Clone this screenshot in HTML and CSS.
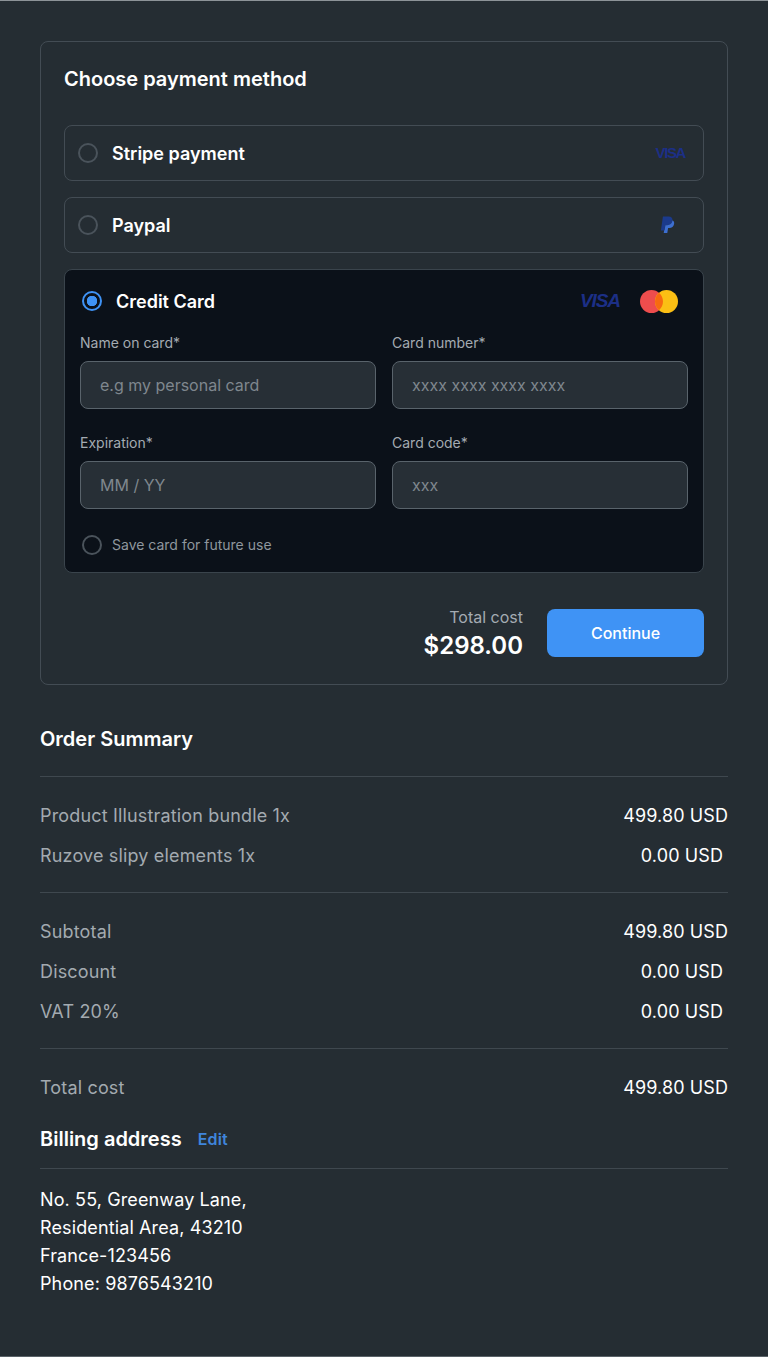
FILE: index.html
```html
<!DOCTYPE html>
<html lang="en">
<head>
  <meta charset="UTF-8">
  <meta name="viewport" content="width=device-width, initial-scale=1.0">
  <title>Checkout</title>
  <link rel="stylesheet" href="styles.css">
</head>
<body>
  <div class="page">
    <section class="pay-card">
      <h2 class="pay-title">Choose payment method</h2>

      <div class="option">
        <span class="radio"></span>
        <span class="option-name">Stripe payment</span>
        <span class="visa visa-small">VISA</span>
      </div>

      <div class="option">
        <span class="radio"></span>
        <span class="option-name">Paypal</span>
        <svg class="paypal" width="15" height="18" viewBox="0 0 14 18">
          <path d="M2.4 0.5H8C11 0.5 12.4 2.2 11.9 4.8C11.4 7.7 9.4 9.2 6.6 9.2H4.9L4 14.6H0.4Z" fill="#1b3a8c"/>
          <path d="M12 4.2C13.4 5 13.9 6.3 13.6 8C13.1 10.5 11.3 11.9 8.8 11.9H7.6L6.8 17H3.2L3.7 14.2H4.1L4.9 9.2H6.6C9.4 9.2 11.4 7.7 11.9 4.8Z" fill="#3d6fd1"/>
        </svg>
      </div>

      <div class="card-box">
        <div class="card-head">
          <span class="radio radio-on"></span>
          <span class="option-name">Credit Card</span>
          <span class="visa">VISA</span>
          <svg class="master" width="38" height="23" viewBox="0 0 38 23">
            <circle cx="11.5" cy="11.5" r="11.5" fill="#ee4d4d"/>
            <circle cx="26.5" cy="11.5" r="11.5" fill="#fbbf14"/>
            <path d="M19 2.8a11.5 11.5 0 0 1 0 17.4a11.5 11.5 0 0 1 0-17.4Z" fill="#f76a10"/>
          </svg>
        </div>

        <div class="fields">
          <div class="field">
            <label class="field-label">Name on card*</label>
            <div class="input">e.g my personal card</div>
          </div>
          <div class="field">
            <label class="field-label">Card number*</label>
            <div class="input input-short">xxxx xxxx xxxx xxxx</div>
          </div>
          <div class="field">
            <label class="field-label">Expiration*</label>
            <div class="input">MM / YY</div>
          </div>
          <div class="field">
            <label class="field-label">Card code*</label>
            <div class="input input-short">xxx</div>
          </div>
        </div>

        <div class="save-row">
          <span class="radio"></span>
          <span class="save-text">Save card for future use</span>
        </div>
      </div>

      <div class="pay-foot">
        <div class="pay-total">
          <div class="pay-total-label">Total cost</div>
          <div class="pay-total-value">$298.00</div>
        </div>
        <button class="continue" type="button">Continue</button>
      </div>
    </section>

    <h3 class="section-title summary-title">Order Summary</h3>

    <div class="rows">
      <div class="row"><span>Product Illustration bundle 1x</span><b>499.80 USD</b></div>
      <div class="row"><span>Ruzove slipy elements 1x</span><b class="zero">0.00 USD</b></div>
    </div>
    <div class="rows">
      <div class="row"><span>Subtotal</span><b>499.80 USD</b></div>
      <div class="row"><span>Discount</span><b class="zero">0.00 USD</b></div>
      <div class="row"><span>VAT 20%</span><b class="zero">0.00 USD</b></div>
    </div>
    <div class="rows rows-total">
      <div class="row"><span>Total cost</span><b>499.80 USD</b></div>
    </div>

    <div class="billing-head">
      <h3 class="section-title">Billing address</h3>
      <a class="edit" href="#">Edit</a>
    </div>
    <p class="address">No. 55, Greenway Lane,<br>Residential Area, 43210<br>France-123456<br>Phone: 9876543210</p>
  </div>
</body>
</html>
```

FILE: styles.css
```css
* {
  box-sizing: border-box;
}
body {
  margin: 0;
  background-color: #252d33;
  font-family: Inter, 'Noto Sans', sans-serif;
  color: #fff;
}
.page {
  min-height: 1357px;
  padding: 40px 40px 0;
  border-top: 1px solid #8d9398;
  border-bottom: 1px solid #5a6268;
}
.pay-card {
  height: 644px;
  padding: 24px 23px;
  border: 1px solid #434c54;
  border-radius: 8px;
}
.pay-title {
  margin: 0 0 33px;
  font-size: 20px;
  line-height: 26px;
  font-weight: 600;
}
.option {
  display: flex;
  align-items: center;
  height: 56px;
  margin-bottom: 16px;
  padding: 0 18px 0 13px;
  border: 1px solid #434c54;
  border-radius: 8px;
}
.radio {
  width: 20px;
  height: 20px;
  flex: none;
  border: 2px solid #4a535b;
  border-radius: 50%;
}
.radio-on {
  border-color: #3f93f5;
  background: radial-gradient(circle, #3f93f5 0, #3f93f5 5px, transparent 5.5px);
}
.option-name {
  flex: 1;
  margin-left: 14px;
  font-size: 18px;
  font-weight: 600;
}
.visa {
  font-family: 'Liberation Sans', sans-serif;
  font-size: 19px;
  font-weight: 700;
  font-style: italic;
  letter-spacing: -1.1px;
  color: #1c2f86;
}
.visa-small {
  padding-bottom: 2px;
  font-size: 15px;
  font-style: normal;
  letter-spacing: -1.4px;
}
.paypal {
  margin-right: 10px;
}
.card-box {
  height: 304px;
  padding: 19px 15px 0;
  background-color: #0b1119;
  border: 1px solid #3a444c;
  border-radius: 8px;
}
.card-head {
  display: flex;
  align-items: center;
  height: 24px;
  padding: 0 10px 0 2px;
}
.card-head .option-name {
  margin-left: 14px;
}
.master {
  margin-left: 20px;
}
.fields {
  display: grid;
  grid-template-columns: 1fr 1fr;
  gap: 24px 16px;
  margin-top: 20px;
}
.field-label {
  display: block;
  margin-bottom: 8px;
  font-size: 14px;
  line-height: 20px;
  color: #a4abb2;
}
.input {
  height: 48px;
  padding: 0 19px;
  background-color: #272f36;
  border: 1px solid #59636b;
  border-radius: 8px;
  font-size: 16px;
  line-height: 46px;
  color: #7f878e;
}
.save-row {
  display: flex;
  align-items: center;
  margin-top: 26px;
  padding-left: 2px;
}
.save-text {
  margin-left: 10px;
  padding-bottom: 1px;
  font-size: 14px;
  color: #8f979e;
}
.pay-foot {
  display: flex;
  justify-content: flex-end;
  align-items: center;
  gap: 24px;
  margin-top: 32px;
}
.pay-total {
  text-align: right;
}
.pay-total-label {
  font-size: 16px;
  line-height: 24px;
  color: #a4abb2;
}
.pay-total-value {
  margin-bottom: -1px;
  padding-top: 1px;
  font-size: 24px;
  line-height: 32px;
  font-weight: 600;
}
.continue {
  width: 157px;
  height: 48px;
  background-color: #3f93f5;
  border: none;
  border-radius: 8px;
  font-family: inherit;
  font-size: 16px;
  font-weight: 500;
  color: #fff;
}
.section-title {
  margin: 0;
  font-size: 20px;
  line-height: 28px;
  font-weight: 600;
}
.summary-title {
  margin-top: 40px;
  padding-bottom: 23px;
  border-bottom: 1px solid #3f484f;
}
.rows {
  padding: 19px 0 16px;
  border-bottom: 1px solid #3f484f;
}
.rows-total {
  padding-bottom: 0;
  border-bottom: none;
}
.row {
  display: flex;
  justify-content: space-between;
  height: 40px;
  font-size: 18px;
  line-height: 40px;
  letter-spacing: 0.16px;
  color: #a3aab0;
}
.row b {
  font-weight: 400;
  letter-spacing: 0.1px;
  color: #fff;
}
.row .zero {
  margin-right: 5px;
}
.billing-head {
  display: flex;
  align-items: center;
  gap: 16px;
  padding: 17px 0 15px;
  border-bottom: 1px solid #3f484f;
}
.edit {
  font-size: 16px;
  font-weight: 600;
  letter-spacing: 0.2px;
  color: #3f85dc;
  text-decoration: none;
}
.address {
  margin: 17px 0 0;
  font-size: 18px;
  line-height: 28px;
  letter-spacing: 0.12px;
}
```
